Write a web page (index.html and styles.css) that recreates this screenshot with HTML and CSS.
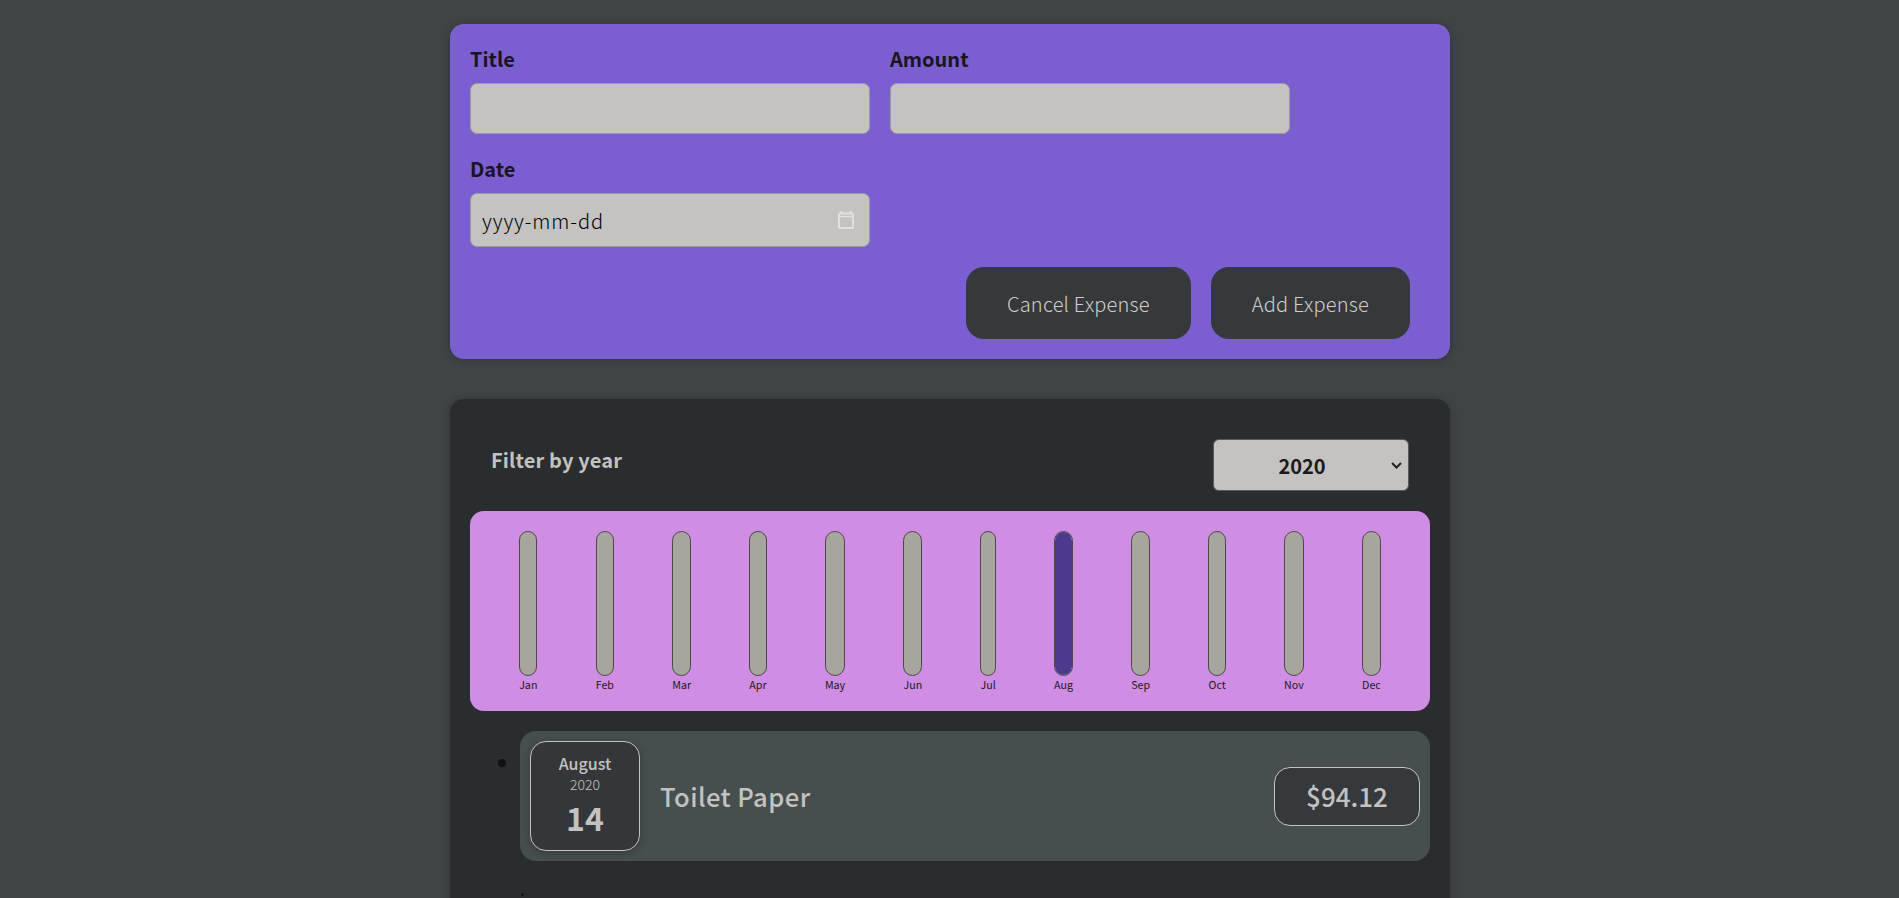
FILE: index.html
```html
<!DOCTYPE html>
<html>
<head>
	<title>Expenses</title>
	<meta name="viewport" content="width=device-width, initial-scale=1">

	<link rel="stylesheet" href="styles.css">
</head>
<body>
	<div class="container">
		<form class="new-expense">
			<div class="controls">
				<div class="control">
					<label for="title">Title</label>
					<input type="text" id="title">
				</div>
				<div class="control">
					<label for="amount">Amount</label>
					<input type="number" id="amount">
				</div>
				<div class="control">
					<label for="date">Date</label>
					<input type="text" id="date" class="date-input" value="yyyy-mm-dd">
				</div>
			</div>
			<div class="actions">
				<button type="button">Cancel Expense</button>
				<button type="submit">Add Expense</button>
			</div>
		</form>

		<div class="expenses">
			<div class="filter">
				<label for="year">Filter by year</label>
				<select id="year">
					<option>2020</option>
				</select>
			</div>

			<div class="chart">
				<div class="chart-col"><div class="bar"></div><div class="bar-label">Jan</div></div>
				<div class="chart-col"><div class="bar"></div><div class="bar-label">Feb</div></div>
				<div class="chart-col"><div class="bar"></div><div class="bar-label">Mar</div></div>
				<div class="chart-col"><div class="bar"></div><div class="bar-label">Apr</div></div>
				<div class="chart-col"><div class="bar"></div><div class="bar-label">May</div></div>
				<div class="chart-col"><div class="bar"></div><div class="bar-label">Jun</div></div>
				<div class="chart-col"><div class="bar"></div><div class="bar-label">Jul</div></div>
				<div class="chart-col"><div class="bar"><div class="bar-fill" style="height: 100%"></div></div><div class="bar-label">Aug</div></div>
				<div class="chart-col"><div class="bar"></div><div class="bar-label">Sep</div></div>
				<div class="chart-col"><div class="bar"></div><div class="bar-label">Oct</div></div>
				<div class="chart-col"><div class="bar"></div><div class="bar-label">Nov</div></div>
				<div class="chart-col"><div class="bar"></div><div class="bar-label">Dec</div></div>
			</div>

			<ul class="expense-list">
				<li>
					<div class="expense-item">
						<div class="expense-date">
							<div class="date-month">August</div>
							<div class="date-year">2020</div>
							<div class="date-day">14</div>
						</div>
						<h2 class="expense-title">Toilet Paper</h2>
						<div class="expense-price">$94.12</div>
					</div>
				</li>
			</ul>
			<div class="next-bullet"></div>
		</div> <!-- .expenses -->
	</div> <!-- .container -->
</body>
</html>
```

FILE: styles.css
```css
* {
	box-sizing: border-box;
}

html, body {
	height: 898px;
	overflow: hidden;
}

body {
	margin: 0;
	background-color: #3f4447;
	font-family: "Noto Sans CJK JP", "Noto Sans", sans-serif;
	font-size: 20px;
	color: #c4c2bf;
}

.container {
	width: 1000px;
	margin: 24px 0 0 450px;
}

/* form */
.new-expense {
	padding: 20px;
	background-color: #7b5fd1;
	border-radius: 14px;
	box-shadow: 0 1px 8px rgba(0, 0, 0, 0.25);
}

.controls {
	display: flex;
	flex-wrap: wrap;
	gap: 20px;
}

.control label {
	display: block;
	margin-bottom: 10px;
	font-weight: bold;
	color: #1a1423;
}

.control input {
	display: block;
	width: 400px;
	padding: 10px;
	font-family: inherit;
	font-size: 20px;
	color: #1a1a1a;
	background-color: #c5c3c1;
	border: 1px solid #9c9a9b;
	border-radius: 7px;
	outline: none;
}

.control .date-input {
	height: 54px;
	padding-left: 11px;
	font-weight: 300;
	letter-spacing: 0.9px;
	color: #000;
	background-image: url("data:image/svg+xml,%3Csvg xmlns='http://www.w3.org/2000/svg' width='16' height='18'%3E%3Cpath d='M3.5 0v3M12.5 0v3' stroke='%23e2e0de' stroke-width='2'/%3E%3Crect x='1' y='2.5' width='14' height='14.5' rx='1' fill='none' stroke='%23e2e0de' stroke-width='2'/%3E%3Cpath d='M1 5.5h14' stroke='%23e2e0de' stroke-width='1.5'/%3E%3C/svg%3E");
	background-repeat: no-repeat;
	background-position: right 15px top 17px;
}

.actions {
	display: flex;
	justify-content: flex-end;
	gap: 20px;
	margin-top: 20px;
	padding-right: 20px;
}

.actions button {
	padding: 21.5px 41px;
	font-family: inherit;
	font-size: 20px;
	font-weight: 300;
	letter-spacing: 0.2px;
	color: #d0cecb;
	background-color: #35393c;
	border: none;
	border-radius: 18px;
}

/* expenses */
.expenses {
	height: 600px;
	margin-top: 40px;
	padding: 20px;
	background-color: #2a2d2f;
	border-radius: 14px;
	box-shadow: 0 1px 8px rgba(0, 0, 0, 0.25);
}

.filter {
	display: flex;
	justify-content: space-between;
	align-items: center;
	padding: 20px 21px;
}

.filter label {
	padding-bottom: 12px;
	font-weight: bold;
	letter-spacing: 0.15px;
}

.filter select {
	width: 196px;
	height: 52px;
	padding: 0 18px 0 0;
	font-family: inherit;
	font-size: 20px;
	font-weight: bold;
	text-align: center;
	color: #1a1a1a;
	background-color: #c5c3c1;
	background-image: url("data:image/svg+xml,%3Csvg xmlns='http://www.w3.org/2000/svg' width='11' height='7'%3E%3Cpath d='M1 1l4.5 4.5L10 1' fill='none' stroke='%23222' stroke-width='2'/%3E%3C/svg%3E");
	background-repeat: no-repeat;
	background-position: right 6px center;
	border: 1px solid #5a5a5a;
	border-radius: 6px;
	appearance: none;
}

.chart {
	display: flex;
	justify-content: space-around;
	padding: 20px;
	background-color: #cf8de3;
	border-radius: 14px;
}

.chart-col {
	display: flex;
	flex-direction: column;
	align-items: stretch;
}

.bar {
	display: flex;
	align-items: flex-end;
	height: 145px;
	overflow: hidden;
	background-color: #a8a59f;
	border: 1px solid #4a4a4a;
	border-radius: 12px;
}

.bar-fill {
	width: 100%;
	background-color: #4d3a8c;
	border-radius: 10px;
}

.bar-label {
	margin-top: 2px;
	font-size: 10.7px;
	line-height: 13px;
	text-align: center;
	color: #1a1a1a;
}

/* list */
.expense-list {
	margin: 20px 0 0;
	padding: 0 0 0 50px;
	color: #111;
}

.expense-item {
	display: flex;
	align-items: center;
	gap: 20px;
	padding: 10px;
	color: #c4c2bf;
	background-color: #474e50;
	border-radius: 16px;
}

.expense-date {
	display: flex;
	flex-direction: column;
	align-items: center;
	justify-content: center;
	flex-shrink: 0;
	width: 110px;
	height: 110px;
	padding-bottom: 3px;
	background-color: #33373a;
	border: 1px solid #c4c2bf;
	border-radius: 16px;
	box-shadow: 0 2px 8px rgba(0, 0, 0, 0.25);
}

.date-month {
	font-size: 16px;
	font-weight: 500;
	line-height: 22px;
}

.date-year {
	font-size: 14px;
	font-weight: 300;
	line-height: 20px;
}

.date-day {
	margin-top: 3px;
	font-size: 32px;
	font-weight: bold;
	line-height: 40px;
}

.expense-title {
	flex: 1;
	margin: 0;
	padding-bottom: 2px;
	font-size: 25.6px;
	font-weight: 500;
	letter-spacing: 0.4px;
}

.expense-price {
	width: 146px;
	height: 59px;
	font-size: 26px;
	font-weight: 500;
	line-height: 55px;
	text-align: center;
	background-color: #35393c;
	border: 1px solid #c4c2bf;
	border-radius: 16px;
}

.next-bullet {
	width: 3px;
	height: 3px;
	margin: 32px 0 0 51px;
	background-color: #111;
	border-radius: 50%;
}
```
